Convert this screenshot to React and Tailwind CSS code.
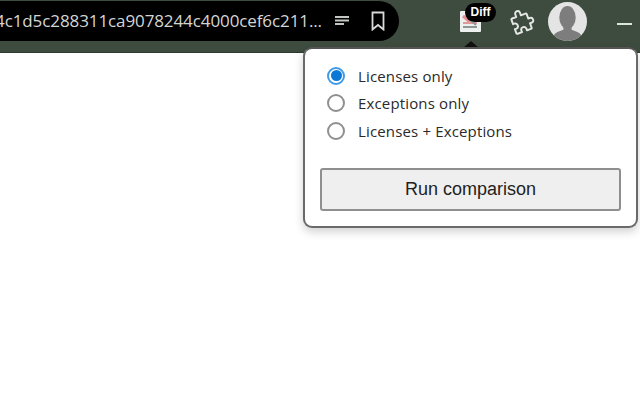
import React from "react";

function Radio({ checked, label }) {
  return (
    <label className="flex items-center h-[27.5px] gap-[13px]">
      {checked ? (
        <span className="w-[18px] h-[18px] rounded-full border-2 border-[#3f9ae8] flex items-center justify-center">
          <span className="w-[11px] h-[11px] rounded-full bg-[#0b78d6]" />
        </span>
      ) : (
        <span className="w-[18px] h-[18px] rounded-full border-2 border-[#8f8f8f]" />
      )}
      <span className="text-[15px] text-[#2a2a2a] font-['Open_Sans',sans-serif] tracking-[0.15px]">{label}</span>
    </label>
  );
}

export default function App() {
  return (
    <div className="relative w-[640px] h-[400px] bg-white overflow-hidden font-['Roboto',sans-serif]">
      <header className="flex items-start h-[53px] bg-[#3e4c3f] border-b border-[#2e3a30] pt-[1px]">
        <div className="w-[399px] h-[40px] shrink-0 bg-black rounded-r-[20px] flex items-center overflow-hidden">
          <span className="w-[322px] shrink-0 whitespace-nowrap text-[17px] tracking-[-0.1px] text-[#d4d6d4] font-['Open_Sans',sans-serif] overflow-hidden flex justify-end">
            4c1d5c288311ca9078244c4000cef6c211...
          </span>
          <svg width="15" height="12" viewBox="0 0 15 12" className="ml-[13px] shrink-0">
            <path d="M0 2h14M0 5.500h14M0 9h9" stroke="#c4c6c4" strokeWidth="2" fill="none" />
          </svg>
          <svg width="14" height="20" viewBox="0 0 14 20" className="ml-[21px] shrink-0">
            <path d="M1.500 1.500h11v17L7 14l-5.500 4.500z" stroke="#d8dad8" strokeWidth="1.800" fill="none" />
          </svg>
        </div>
        <div className="relative ml-[61px] w-[22px] h-[30px] shrink-0">
          <svg width="21" height="21" viewBox="0 0 21 21" className="absolute left-0 top-[10px]">
            <rect x="0" y="0" width="21" height="21" rx="1" fill="#eef0f0" />
            <path d="M3 5l7 6" stroke="#e38f92" strokeWidth="3" />
            <path d="M3 12h14" stroke="#e09a9c" strokeWidth="2" />
            <path d="M3 16h14M9 8l7 6" stroke="#8f9794" strokeWidth="2" />
          </svg>
          <span className="absolute left-[5px] top-[2px] w-[31px] h-[19px] rounded-full bg-black text-white text-[12px] font-bold leading-[19px] text-center font-['Liberation_Sans',sans-serif]">
            Diff
          </span>
        </div>
        <svg width="27" height="26" viewBox="0 0 24 24" className="ml-[26px] mt-[8px] shrink-0">
          <path
            d="M9 3.500a2.300 2.300 0 0 1 4.600 0V6H18a1 1 0 0 1 1 1v4.200h1.500a2.300 2.300 0 0 1 0 4.600H19V20a1 1 0 0 1-1 1h-3.800v-1.500a2.500 2.500 0 0 0-5 0V21H5a1 1 0 0 1-1-1v-3.800h1.200a2.500 2.500 0 0 0 0-5H4V7a1 1 0 0 1 1-1h4z"
            stroke="#e4e7e4"
            strokeWidth="1.800"
            strokeLinejoin="round"
            fill="none"
            transform="rotate(-20 12 12)"
          />
        </svg>
        <svg width="39" height="39" viewBox="0 0 38 38" className="ml-[13px] mt-[1px] shrink-0">
          <defs>
            <clipPath id="avatar">
              <circle cx="19" cy="19" r="19" />
            </clipPath>
          </defs>
          <circle cx="19" cy="19" r="19" fill="#e4e4e4" />
          <g clipPath="url(#avatar)" fill="#7d7d7d">
            <ellipse cx="19" cy="15" rx="8" ry="11" />
            <path d="M15 22h8v5c5 2 11 3 11 11H4c0-8 6-9 11-11z" />
          </g>
        </svg>
        <span className="ml-[30px] mt-[22px] w-[15px] h-[2px] shrink-0 bg-[#dfe3df]" />
      </header>

      <span className="absolute left-[463px] top-[41px] w-0 h-0 border-x-[8px] border-x-transparent border-b-[7px] border-b-[#111]" />

      <div className="absolute left-[303px] top-[47px] w-[335px] h-[181px] bg-white rounded-[9px] border-2 border-[#6a6a6a] border-t-[#555] shadow-[0_4px_10px_rgba(0,0,0,0.18)] pt-[13px] px-[15px]">
        <div className="pl-[7px]">
          <Radio checked label="Licenses only" />
          <Radio label="Exceptions only" />
          <Radio label="Licenses + Exceptions" />
        </div>
        <button className="mt-[23px] w-[301px] h-[43px] bg-[#efefef] border-2 border-[#8f8f8f] rounded-[3px] text-[18px] text-[#222] font-['Liberation_Sans',sans-serif]">
          Run comparison
        </button>
      </div>
    </div>
  );
}
